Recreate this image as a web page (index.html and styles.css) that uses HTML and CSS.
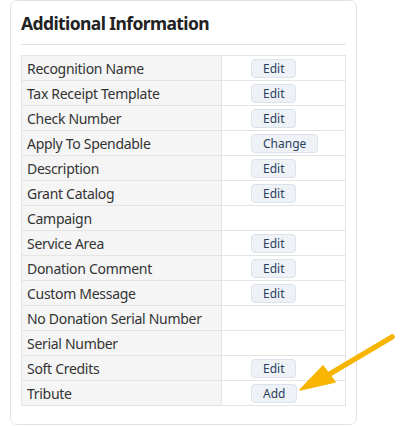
FILE: index.html
```html
<!DOCTYPE html>
<html lang="en">
<head>
    <meta charset="UTF-8">
    <title>Additional Information</title>
    <link rel="stylesheet" href="styles.css">
</head>
<body>
    <div class="panel">
        <h2 class="panel-title">Additional Information</h2>
        <table class="info-table">
            <tr><td>Recognition Name</td><td><button class="btn">Edit</button></td></tr>
            <tr><td>Tax Receipt Template</td><td><button class="btn">Edit</button></td></tr>
            <tr><td>Check Number</td><td><button class="btn">Edit</button></td></tr>
            <tr><td>Apply To Spendable</td><td><button class="btn">Change</button></td></tr>
            <tr><td>Description</td><td><button class="btn">Edit</button></td></tr>
            <tr><td>Grant Catalog</td><td><button class="btn">Edit</button></td></tr>
            <tr><td>Campaign</td><td></td></tr>
            <tr><td>Service Area</td><td><button class="btn">Edit</button></td></tr>
            <tr><td>Donation Comment</td><td><button class="btn">Edit</button></td></tr>
            <tr><td>Custom Message</td><td><button class="btn">Edit</button></td></tr>
            <tr><td>No Donation Serial Number</td><td></td></tr>
            <tr><td>Serial Number</td><td></td></tr>
            <tr><td>Soft Credits</td><td><button class="btn">Edit</button></td></tr>
            <tr><td>Tribute</td><td><button class="btn">Add</button></td></tr>
        </table>
    </div>

    <!-- callout arrow pointing at the Tribute button -->
    <svg class="callout" width="110" height="70" viewBox="0 0 110 70">
        <line x1="100" y1="8" x2="36" y2="46" stroke="#f7b500" stroke-width="5.5" stroke-linecap="round"/>
        <polygon points="8,61 31,37 43,53" fill="#f7b500" stroke="#f7b500" stroke-width="1.5" stroke-linejoin="round"/>
    </svg>
</body>
</html>
```

FILE: styles.css
```css
* {
    margin: 0;
    padding: 0;
    box-sizing: border-box;
}

body {
    background: #ffffff;
    color: #333333;
    font-family: 'Noto Sans', 'Open Sans', sans-serif;
    padding-left: 10px;
    position: relative;
}

.panel {
    width: 347px;
    height: 425px;
    border: 1px solid #dfe4ec;
    border-radius: 7px;
    padding: 10px 10px 0 10px;
}

.panel-title {
    font-size: 17.5px;
    font-weight: 700;
    letter-spacing: -0.6px;
    color: #222222;
    line-height: 24px;
    height: 34px;
    border-bottom: 1px solid #dde3ec;
}

.info-table {
    margin-top: 10px;
    width: 100%;
    border-collapse: collapse;
    font-size: 14px;
    letter-spacing: -0.3px;
}

.info-table td {
    border: 1px solid #e4e4e4;
    height: 25px;
    padding: 0 5px;
    vertical-align: middle;
}

.info-table td:first-child {
    background: #f5f5f5;
    width: 200px;
}

.info-table td:last-child {
    padding-left: 29px;
}

.btn {
    display: block;
    height: 19px;
    padding: 0 11px;
    background: #eef2f7;
    border: 1px solid #dbe2eb;
    border-radius: 4px;
    color: #2b3f5c;
    font-family: inherit;
    font-size: 12px;
    letter-spacing: 0;
    line-height: 17px;
}

.callout {
    position: absolute;
    left: 292px;
    top: 329px;
}
```
